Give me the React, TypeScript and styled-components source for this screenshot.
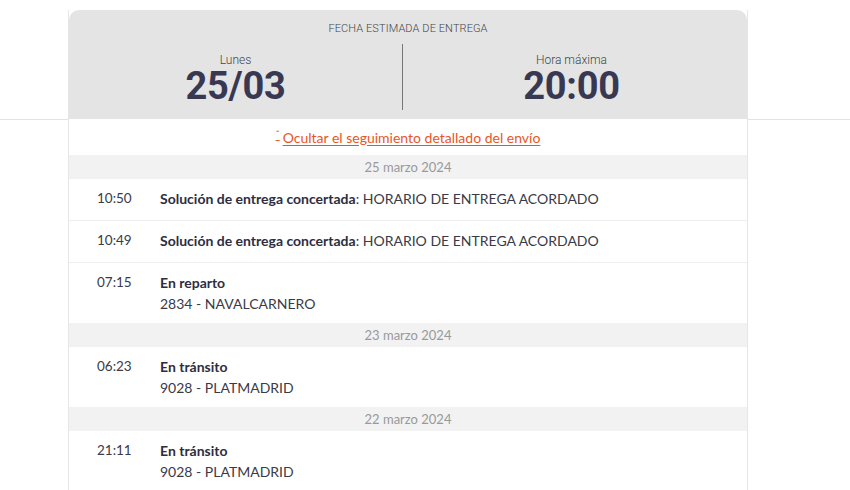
import React from "react";
import styled, { createGlobalStyle } from "styled-components";

const GlobalStyle = createGlobalStyle`
  body {
    margin: 0;
    font-family: Lato, "Open Sans", sans-serif;
    background: linear-gradient(
      to bottom,
      #fff 119px,
      #e3e3e3 119px,
      #e3e3e3 120px,
      #fff 120px
    );
    color: #3a3a48;
  }
`;

const Page = styled.div`
  padding: 10px 0 0 68px;
`;

const Card = styled.div`
  width: 678px;
  border-left: 1px solid #e6e6e6;
  border-right: 1px solid #e6e6e6;
  background: #fff;
`;

const Header = styled.div`
  background: #e4e4e4;
  border-radius: 10px 10px 0 0;
  height: 109px;
  padding-top: 12px;
  box-sizing: border-box;
`;

const HeaderTitle = styled.div`
  text-align: center;
  font-family: Roboto, sans-serif;
  font-weight: 300;
  font-size: 11px;
  color: #444;
  letter-spacing: 0.1px;
`;

const Split = styled.div`
  display: grid;
  grid-template-columns: 333px 1px 1fr;
  margin-top: 9px;
`;

const Half = styled.div<{ $right?: boolean }>`
  text-align: center;
  padding-top: 10px;
  padding-right: ${(p) => (p.$right ? "7px" : "0")};
`;

const Divider = styled.div`
  background: #777;
  height: 66px;
`;

const Small = styled.div`
  font-family: Roboto, sans-serif;
  font-weight: 300;
  font-size: 12px;
  line-height: 12px;
  color: #444;
`;

const Big = styled.div`
  font-family: Roboto, sans-serif;
  font-weight: 700;
  font-size: 38px;
  line-height: 40px;
  color: #393853;
  letter-spacing: -0.3px;
`;

const ToggleRow = styled.div`
  height: 36px;
  display: flex;
  align-items: center;
  justify-content: center;
`;

const ToggleLink = styled.a`
  color: #e8561f;
  font-size: 14px;
  text-decoration: underline;
  text-underline-offset: 2px;
  cursor: pointer;
  display: flex;
  align-items: flex-start;
  gap: 3px;
`;

const Caret = styled.span`
  font-size: 10px;
  line-height: 10px;
`;

const DateBar = styled.div`
  background: #f2f2f2;
  height: 24px;
  line-height: 24px;
  text-align: center;
  font-size: 13px;
  color: #999;
`;

const EventRow = styled.div<{ $last?: boolean }>`
  display: grid;
  grid-template-columns: 63px 1fr;
  padding: 9px 0 9px 28px;
  line-height: 21px;
  font-size: 14px;
  border-bottom: ${(p) => (p.$last ? "none" : "1px solid #eeeeee")};
  min-height: 23px;
`;

const Time = styled.div`
  color: #3a3a48;
  font-size: 13.5px;
`;

const Desc = styled.div`
  color: #3a3a48;
  b {
    font-weight: 700;
    color: #2e2d40;
  }
`;

type Event = { time: string; title: string; detail: string; inline?: boolean };
type Day = { date: string; events: Event[] };

const days: Day[] = [
  {
    date: "25 marzo 2024",
    events: [
      { time: "10:50", title: "Solución de entrega concertada", detail: "HORARIO DE ENTREGA ACORDADO", inline: true },
      { time: "10:49", title: "Solución de entrega concertada", detail: "HORARIO DE ENTREGA ACORDADO", inline: true },
      { time: "07:15", title: "En reparto", detail: "2834 - NAVALCARNERO" },
    ],
  },
  {
    date: "23 marzo 2024",
    events: [{ time: "06:23", title: "En tránsito", detail: "9028 - PLATMADRID" }],
  },
  {
    date: "22 marzo 2024",
    events: [{ time: "21:11", title: "En tránsito", detail: "9028 - PLATMADRID" }],
  },
];

export default function App() {
  return (
    <>
      <GlobalStyle />
      <Page>
        <Card>
          <Header>
            <HeaderTitle>FECHA ESTIMADA DE ENTREGA</HeaderTitle>
            <Split>
              <Half>
                <Small>Lunes</Small>
                <Big>25/03</Big>
              </Half>
              <Divider />
              <Half $right>
                <Small>Hora máxima</Small>
                <Big>20:00</Big>
              </Half>
            </Split>
          </Header>
          <ToggleRow>
            <ToggleLink>
              <Caret>ˆ</Caret>Ocultar el seguimiento detallado del envío
            </ToggleLink>
          </ToggleRow>
          {days.map((d) => (
            <React.Fragment key={d.date}>
              <DateBar>{d.date}</DateBar>
              {d.events.map((e, i) => (
                <EventRow key={e.time} $last={i === d.events.length - 1}>
                  <Time>{e.time}</Time>
                  {e.inline ? (
                    <Desc>
                      <b>{e.title}</b>: {e.detail}
                    </Desc>
                  ) : (
                    <Desc>
                      <b>{e.title}</b>
                      <div>{e.detail}</div>
                    </Desc>
                  )}
                </EventRow>
              ))}
            </React.Fragment>
          ))}
        </Card>
      </Page>
    </>
  );
}
